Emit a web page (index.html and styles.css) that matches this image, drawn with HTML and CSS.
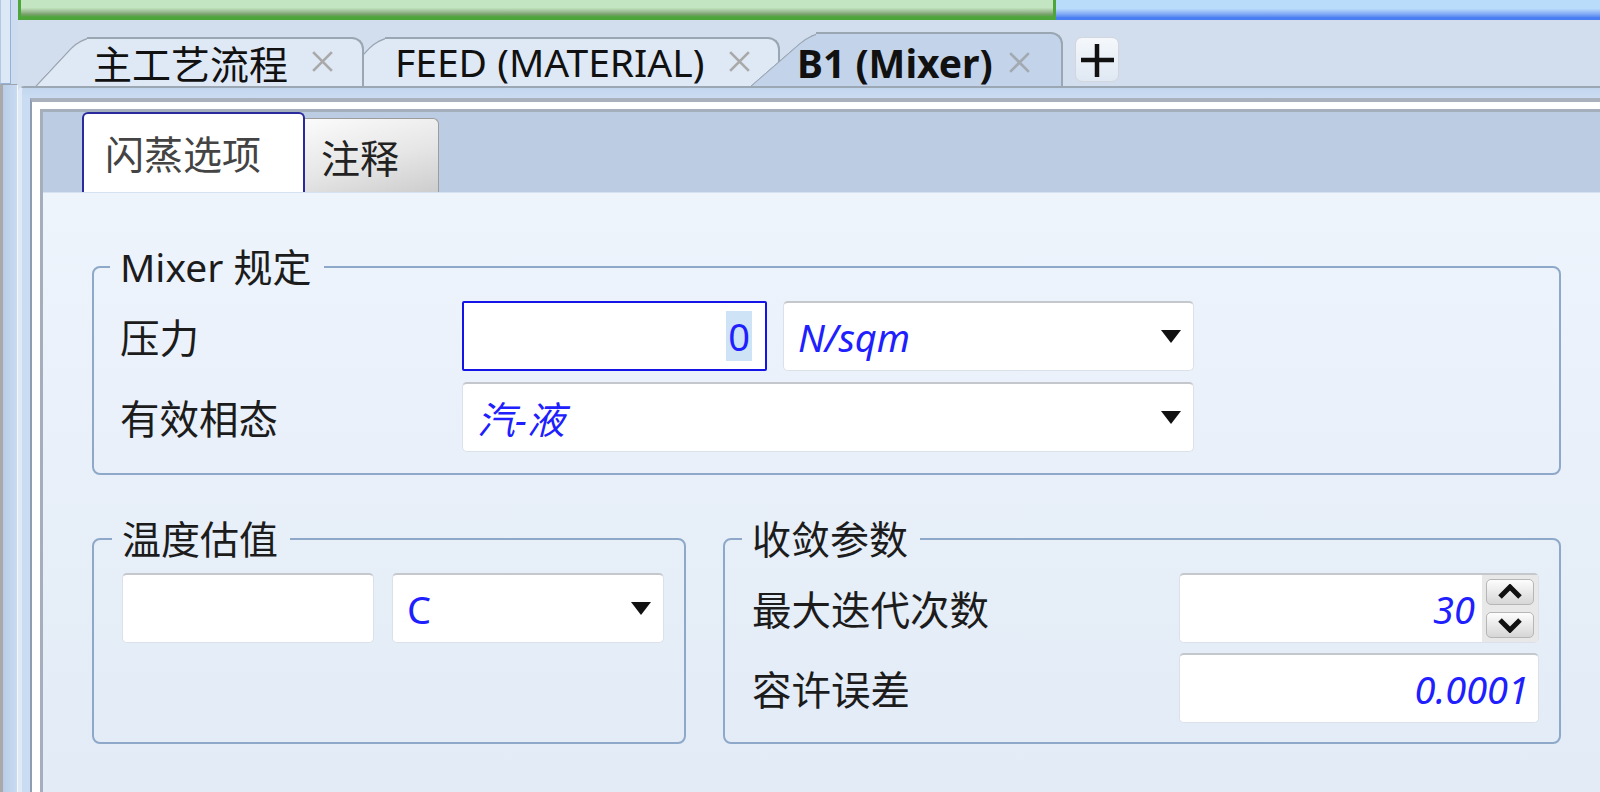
FILE: index.html
```html
<!DOCTYPE html>
<html lang="zh-CN">
<head>
    <meta charset="UTF-8">
    <meta name="viewport" content="width=device-width, initial-scale=1.0">
    <title>B1 (Mixer)</title>
    <link rel="stylesheet" href="styles.css">
</head>
<body>
<div class="app">
    <aside class="side">
        <div class="side-top"><div class="side-box"></div></div>
        <div class="side-rest"></div>
    </aside>

    <div class="main">
        <div class="topbar">
            <div class="bar-green"></div>
            <div class="bar-blue"></div>
        </div>

        <div class="tabstrip">
            <div class="tab tab-1">
                <span class="tab-label">主工艺流程</span>
                <svg class="tab-close" viewBox="0 0 24 24"><path d="M3 3L21 21M21 3L3 21"/></svg>
            </div>
            <div class="tab tab-2">
                <span class="tab-label">FEED (MATERIAL)</span>
                <svg class="tab-close" viewBox="0 0 24 24"><path d="M3 3L21 21M21 3L3 21"/></svg>
            </div>
            <div class="tab tab-3 tab-active">
                <span class="tab-label">B1 (Mixer)</span>
                <svg class="tab-close" viewBox="0 0 24 24"><path d="M3 3L21 21M21 3L3 21"/></svg>
            </div>
            <div class="tab-add">
                <svg viewBox="0 0 36 36"><path d="M18 2V35M2 18H35"/></svg>
            </div>
        </div>

        <div class="docframe">
            <div class="formwin">
                <div class="formwin-inner">
                    <div class="formbody">
                        <div class="subtabs">
                            <div class="subtab subtab-active">闪蒸选项</div>
                            <div class="subtab">注释</div>
                        </div>

                        <div class="form">
                            <fieldset class="group group-mixer">
                                <legend>Mixer 规定</legend>
                                <div class="grid-mixer">
                                    <label>压力</label>
                                    <div class="field field-focus"><span class="sel">0</span></div>
                                    <div class="field combo"><span class="val">N/sqm</span><i class="caret"></i></div>
                                    <label>有效相态</label>
                                    <div class="field combo span2"><span class="val">汽-液</span><i class="caret"></i></div>
                                </div>
                            </fieldset>

                            <div class="group-row">
                                <fieldset class="group group-temp">
                                    <legend>温度估值</legend>
                                    <div class="temp-row">
                                        <div class="field temp-input"></div>
                                        <div class="field combo temp-unit"><span class="val upright">C</span><i class="caret"></i></div>
                                    </div>
                                </fieldset>

                                <fieldset class="group group-conv">
                                    <legend>收敛参数</legend>
                                    <div class="grid-conv">
                                        <label>最大迭代次数</label>
                                        <div class="field num spin">
                                            <span class="val">30</span>
                                            <div class="spin-btns">
                                                <div class="spin-btn"><svg viewBox="0 0 26 16"><path d="M3 13L13 3L23 13"/></svg></div>
                                                <div class="spin-btn"><svg viewBox="0 0 26 16"><path d="M3 3L13 13L23 3"/></svg></div>
                                            </div>
                                        </div>
                                        <label>容许误差</label>
                                        <div class="field num"><span class="val">0.0001</span></div>
                                    </div>
                                </fieldset>
                            </div>
                        </div>
                    </div>
                </div>
            </div>
        </div>
    </div>
</div>
</body>
</html>
```

FILE: styles.css
```css
body {
    margin: 0;
    width: 1600px;
    height: 792px;
    overflow: hidden;
    background: #d2deed;
    font-family: "Noto Sans", "Noto Sans CJK SC", sans-serif;
    color: #1c1c1c;
}
* { box-sizing: border-box; }

.app { display: flex; height: 792px; }

/* left dock strip */
.side { width: 18px; display: flex; flex-direction: column; }
.side-top { height: 84px; background: #cddcee; }
.side-box {
    width: 11px;
    height: 100%;
    background: #dce8f5;
    border-left: 1px solid #b4c8e2;
    border-right: 1px solid #94b2d8;
    border-bottom: 1px solid #94b2d8;
}
.side-rest {
    flex: 1;
    border-top: 1px solid #9aa4b0;
    border-left: 3px solid #a9a9a9;
    border-right: 1px solid #f4f8fc;
    background: linear-gradient(to right, #b8cde7, #c9dbf1);
}

.main { flex: 1; display: flex; flex-direction: column; min-width: 0; }

/* status bars on top */
.topbar { height: 20px; display: flex; }
.bar-green {
    width: 1038px;
    border: 3px solid #4ea63a;
    border-top: 0;
    background: linear-gradient(to bottom, #c3e5c1 0, #c3e5c1 45%, #a3c29c 65%, #76a06a 85%, #4ea63a 100%);
}
.bar-blue {
    flex: 1;
    border-bottom: 3px solid #4a7ef2;
    background: linear-gradient(to bottom, #b9dcfa 0, #b9dcfa 50%, #8fb5f6 75%, #5a8af2 100%);
}

/* document tabs */
.tabstrip {
    height: 66px;
    display: flex;
    align-items: flex-end;
    padding-left: 17px;
    background: #d2deed;
}
.tab {
    position: relative;
    height: 49px;
    display: flex;
    align-items: center;
    font-size: 39px;
    color: #111;
    white-space: nowrap;
}
.tab::before,
.tab::after {
    content: "";
    position: absolute;
    top: 0;
    bottom: 0;
    z-index: -1;
    background: #dfe9f5;
    border-top: 2px solid #9ba6b3;
}
.tab::before {
    left: 0;
    width: 80px;
    border-left: 2px solid #9ba6b3;
    border-top-left-radius: 12px;
    transform: skewX(-43deg);
    transform-origin: 0 100%;
}
.tab::after {
    left: 52px;
    right: 0;
    border-right: 2px solid #9ba6b3;
    border-top-right-radius: 12px;
}
.tab-1 { width: 329px; padding: 0 29px 0 58px; z-index: 3; }
.tab-2 { width: 447px; padding: 0 28px 0 62px; margin-left: -31px; z-index: 2; }
.tab-3 {
    width: 313px;
    height: 54px;
    padding: 6px 31px 0 47px;
    margin-left: -30px;
    z-index: 4;
    font-weight: bold;
}
.tab-active::before,
.tab-active::after { background: #c3d4ea; }
.tab-active::before { width: 100px; transform: skewX(-49deg); }
.tab-active::after { left: 66px; }

.tab-close {
    width: 25px;
    height: 25px;
    margin-left: auto;
    flex-shrink: 0;
    fill: none;
    stroke: #a9a9a9;
    stroke-width: 2.6;
}
.tab-active .tab-close { stroke: #a3a9b1; }

.tab-add {
    width: 44px;
    height: 45px;
    margin: 0 0 4px 12px;
    border: 1px solid #d3d6dc;
    border-radius: 7px;
    background: linear-gradient(to bottom, #f5f8fc, #dfe8f3);
    display: flex;
    align-items: center;
    justify-content: center;
}
.tab-add svg {
    width: 36px;
    height: 36px;
    fill: none;
    stroke: #111;
    stroke-width: 4.5;
}

/* document window frame */
.docframe {
    flex: 1;
    display: flex;
    border-top: 2px solid #9ca7b4;
    border-left: 4px solid #e0eaf6;
    border-top-left-radius: 6px;
    padding: 10px 0 0 8px;
    background: linear-gradient(to bottom, #c2d6ee, #cadcf1 10px);
}
.formwin {
    flex: 1;
    display: flex;
    border-top: 4px solid #a9b1bd;
    border-left: 2px solid #8e9db0;
}
.formwin-inner {
    flex: 1;
    display: flex;
    border-top: 7px solid #fff;
    border-left: 8px solid #fff;
}
.formbody {
    flex: 1;
    display: flex;
    flex-direction: column;
    border-top: 3px solid #a5aebb;
    border-left: 3px solid #a5aebb;
}

/* form sheet tabs */
.subtabs {
    height: 80px;
    display: flex;
    align-items: flex-end;
    padding-left: 39px;
    background: #bccde3;
}
.subtab {
    height: 74px;
    width: 134px;
    padding-left: 16px;
    display: flex;
    align-items: center;
    font-size: 39px;
    color: #222;
    border: 1px solid #9c9c9c;
    border-left: 0;
    border-bottom: 0;
    border-radius: 0 6px 0 0;
    background: linear-gradient(165deg, #fbfbfb 0, #e6e6e6 55%, #cdcdcd 100%);
}
.subtab-active {
    height: 80px;
    width: 223px;
    padding: 0 0 2px 21px;
    color: #444;
    background: #fff;
    border: 2px solid #2a2a9c;
    border-bottom: 0;
    border-radius: 6px 6px 0 0;
}

/* form body */
.form {
    flex: 1;
    padding: 50px 0 0 49px;
    background: linear-gradient(to bottom, #eef4fc, #e2ebf6);
    border-top: 1px solid #d6e2f0;
}
.group {
    margin: 0;
    border: 2px solid #8da8c8;
    border-radius: 8px;
    padding: 10px 20px 21px 26px;
    min-width: 0;
}
.group legend {
    font-size: 39px;
    line-height: 48px;
    margin-left: -10px;
    padding: 0 12px 0 10px;
    color: #1c1c1c;
}
.group-mixer { width: 1469px; }

.group-row { display: flex; gap: 37px; margin-top: 40px; width: 1469px; }
.group-temp { width: 594px; padding-left: 28px; }
.group-conv { width: 838px; padding-left: 27px; padding-bottom: 19px; }

.grid-mixer {
    display: grid;
    grid-template-columns: 326px 305px 411px;
    grid-auto-rows: 70px;
    column-gap: 16px;
    row-gap: 11px;
    align-items: center;
}
.grid-conv {
    display: grid;
    grid-template-columns: 411px 360px;
    grid-auto-rows: 70px;
    column-gap: 16px;
    row-gap: 10px;
    align-items: center;
}
.grid-mixer label,
.grid-conv label { font-size: 39.5px; color: #1c1c1c; }
.span2 { grid-column: span 2; }

.temp-row { display: flex; gap: 18px; }
.temp-input { width: 253px; }
.temp-unit { width: 273px; }

/* input boxes */
.field {
    height: 70px;
    display: flex;
    align-items: center;
    padding: 0 14px;
    background: #fff;
    border: 1px solid #dbe1e8;
    border-top: 2px solid #c4c7cc;
    border-radius: 5px;
    font-size: 38px;
    color: #2020ff;
}
.field .val { font-style: italic; }
.field .upright { font-style: normal; }
.field-focus {
    justify-content: flex-end;
    padding-right: 13px;
    border: 2px solid #1414e6;
    border-radius: 2px;
}
.sel {
    background: #cfe3f7;
    padding: 0 2px;
    line-height: 50px;
}
.combo { justify-content: space-between; padding-right: 12px; }
.caret {
    width: 0;
    height: 0;
    border-left: 10px solid transparent;
    border-right: 10px solid transparent;
    border-top: 13px solid #111;
}
.num { justify-content: flex-end; padding-right: 9px; }

.spin { padding-right: 0; }
.spin-btns {
    align-self: stretch;
    width: 56px;
    margin-left: 7px;
    background: #e8e8e8;
    display: flex;
    flex-direction: column;
    align-items: center;
    justify-content: center;
    gap: 7px;
}
.spin-btn {
    width: 48px;
    height: 26px;
    border: 1px solid #b6b6b6;
    border-radius: 5px;
    background: linear-gradient(to bottom, #fdfdfd, #d6d6d6);
    display: flex;
    align-items: center;
    justify-content: center;
}
.spin-btn svg {
    width: 26px;
    height: 16px;
    fill: none;
    stroke: #111;
    stroke-width: 5;
}
```
